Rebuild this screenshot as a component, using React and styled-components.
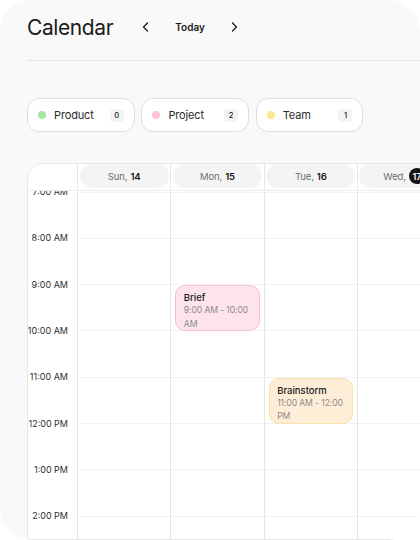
import React from "react";
import styled, { createGlobalStyle } from "styled-components";

const Global = createGlobalStyle`
  html, body { margin: 0; padding: 0; background: #ffffff; }
  body { font-family: Inter, "Noto Sans", Arial, sans-serif; -webkit-font-smoothing: antialiased; }
  * { box-sizing: border-box; }
`;

const ROW = 46.33;
const COLS = `49px repeat(7, 93.33px)`;

const Card = styled.div`
  width: 420px;
  height: 540px;
  border-radius: 32px;
  background: #f9f9f9;
  overflow: hidden;
  padding-left: 27px;
  display: flex;
  flex-direction: column;
`;

const Header = styled.header`
  height: 61px;
  padding-bottom: 6px;
  border-bottom: 1px solid #e7e7e7;
  display: flex;
  align-items: center;
`;

const Title = styled.h1`
  margin: 0;
  font-size: 21px;
  font-weight: 400;
  color: #1b1b1b;
  letter-spacing: -0.4px;
`;

const Nav = styled.div`
  display: flex;
  align-items: center;
  gap: 26px;
  margin-left: 29px;
`;

const NavButton = styled.button`
  border: 0;
  background: none;
  padding: 0;
  display: flex;
  align-items: center;
  color: #1b1b1b;
  cursor: pointer;
`;

const TodayButton = styled.button`
  border: 0;
  background: none;
  padding: 0;
  font-family: inherit;
  font-size: 10px;
  font-weight: 600;
  color: #1b1b1b;
`;

const Filters = styled.div`
  display: grid;
  grid-template-columns: repeat(3, 107.7px);
  gap: 6.7px;
  margin-top: 37px;
`;

const Chip = styled.div`
  height: 34px;
  background: #ffffff;
  border: 1px solid #dedede;
  border-radius: 12px;
  display: flex;
  align-items: center;
  padding: 0 10px 0 10px;
`;

const Dot = styled.span`
  width: 8px;
  height: 8px;
  border-radius: 50%;
  background: ${(p) => p.$color};
  flex: none;
`;

const ChipLabel = styled.span`
  margin-left: 8px;
  font-size: 11px;
  letter-spacing: -0.15px;
  color: #2a2a2a;
`;

const Count = styled.span`
  margin-left: auto;
  width: 14px;
  height: 13px;
  border-radius: 4px;
  background: #f3f3f3;
  font-size: 7.5px;
  font-weight: 500;
  color: #222;
  display: flex;
  align-items: center;
  justify-content: center;
`;

const Panel = styled.section`
  margin-top: 31px;
  width: 705px;
  flex: 1;
  min-height: 0;
  background: #ffffff;
  border: 1px solid #e6e6e6;
  border-top-left-radius: 16px;
  display: flex;
  flex-direction: column;
  overflow: hidden;
`;

const HeadRow = styled.div`
  display: grid;
  grid-template-columns: ${COLS};
  border-bottom: 1px solid #ebebeb;
  height: 27px;
`;

const HeadCell = styled.div`
  border-left: ${(p) => (p.$first ? "0" : "1px solid #e6e6e6")};
  padding: 0 1.5px 2px;
`;

const DayPill = styled.div`
  height: 24px;
  border-radius: 12px;
  background: #f4f4f4;
  display: flex;
  align-items: center;
  justify-content: center;
  font-size: 9.5px;
  letter-spacing: -0.1px;
  color: #6e6e6e;
  gap: 3px;
`;

const DayNum = styled.span`
  color: #141414;
  font-weight: 600;
`;

const TodayNum = styled.span`
  width: 16px;
  height: 16px;
  border-radius: 50%;
  background: #141414;
  color: #ffffff;
  font-weight: 600;
  font-size: 9px;
  display: flex;
  align-items: center;
  justify-content: center;
`;

const Body = styled.div`
  display: grid;
  grid-template-columns: ${COLS};
  flex: 1;
  overflow: hidden;
  padding-top: 0.5px;
`;

const TimeCol = styled.div`
  display: flex;
  flex-direction: column;
`;

const TimeRow = styled.div`
  height: ${ROW}px;
  flex: none;
  display: flex;
  justify-content: flex-end;
  align-items: flex-start;
  padding-right: 9px;
`;

const TimeLabel = styled.span`
  margin-top: -5.5px;
  line-height: 12px;
  font-size: 9px;
  color: #2e2e2e;
  white-space: nowrap;
`;

const DayCol = styled.div`
  position: relative;
  border-left: 1px solid #e6e6e6;
  display: flex;
  flex-direction: column;
`;

const HourCell = styled.div`
  height: ${ROW}px;
  flex: none;
  border-top: 1px solid #f2f2f2;
`;

const Event = styled.div`
  position: absolute;
  left: 4px;
  right: 3.5px;
  top: ${(p) => p.$start * ROW + 1}px;
  height: ${(p) => p.$span * ROW - 0.5}px;
  background: ${(p) => p.$bg};
  border: 1px solid ${(p) => p.$border};
  border-radius: 10px;
  padding: 5px 4px 5px 7.5px;
  overflow: hidden;
`;

const EventTitle = styled.div`
  font-size: 9.5px;
  font-weight: 500;
  color: #1b1b1b;
  line-height: 13px;
`;

const EventTime = styled.div`
  font-size: 8.6px;
  letter-spacing: -0.1px;
  color: #8a8a8a;
  line-height: 13.5px;
`;

const Chevron = ({ dir }) => (
  <svg width="7" height="10" viewBox="0 0 7 10" fill="none">
    <path
      d={dir === "left" ? "M5.5 1 L1.5 5 L5.5 9" : "M1.5 1 L5.5 5 L1.5 9"}
      stroke="#1b1b1b"
      strokeWidth="1.3"
      strokeLinecap="round"
      strokeLinejoin="round"
    />
  </svg>
);

const filters = [
  { label: "Product", color: "#a6e6a3", count: 0 },
  { label: "Project", color: "#fbc3d4", count: 2 },
  { label: "Team", color: "#fbe78f", count: 1 },
];

const days = [
  { name: "Sun", num: 14 },
  { name: "Mon", num: 15 },
  { name: "Tue", num: 16 },
  { name: "Wed", num: 17, today: true },
  { name: "Thu", num: 18 },
  { name: "Fri", num: 19 },
  { name: "Sat", num: 20 },
];

const hours = ["7:00 AM", "8:00 AM", "9:00 AM", "10:00 AM", "11:00 AM", "12:00 PM", "1:00 PM", "2:00 PM", "3:00 PM"];

const events = [
  { day: 1, start: 2, span: 1, title: "Brief", time: "9:00 AM - 10:00 AM", bg: "#fde4ec", border: "#f9bfd2" },
  { day: 2, start: 4, span: 1, title: "Brainstorm", time: "11:00 AM - 12:00 PM", bg: "#feedd7", border: "#fbe2a6" },
];

export default function App() {
  return (
    <>
      <Global />
      <Card>
        <Header>
          <Title>Calendar</Title>
          <Nav>
            <NavButton aria-label="Previous"><Chevron dir="left" /></NavButton>
            <TodayButton>Today</TodayButton>
            <NavButton aria-label="Next"><Chevron dir="right" /></NavButton>
          </Nav>
        </Header>
        <Filters>
          {filters.map((f) => (
            <Chip key={f.label}>
              <Dot $color={f.color} />
              <ChipLabel>{f.label}</ChipLabel>
              <Count>{f.count}</Count>
            </Chip>
          ))}
        </Filters>
        <Panel>
          <HeadRow>
            <HeadCell $first />
            {days.map((d) => (
              <HeadCell key={d.name}>
                <DayPill>
                  <span>{d.name},</span>
                  {d.today ? <TodayNum>{d.num}</TodayNum> : <DayNum>{d.num}</DayNum>}
                </DayPill>
              </HeadCell>
            ))}
          </HeadRow>
          <Body>
            <TimeCol>
              {hours.map((h) => (
                <TimeRow key={h}>
                  <TimeLabel>{h}</TimeLabel>
                </TimeRow>
              ))}
            </TimeCol>
            {days.map((d, i) => (
              <DayCol key={d.name}>
                {hours.map((h) => (
                  <HourCell key={h} />
                ))}
                {events
                  .filter((e) => e.day === i)
                  .map((e) => (
                    <Event key={e.title} $start={e.start} $span={e.span} $bg={e.bg} $border={e.border}>
                      <EventTitle>{e.title}</EventTitle>
                      <EventTime>{e.time}</EventTime>
                    </Event>
                  ))}
              </DayCol>
            ))}
          </Body>
        </Panel>
      </Card>
    </>
  );
}
